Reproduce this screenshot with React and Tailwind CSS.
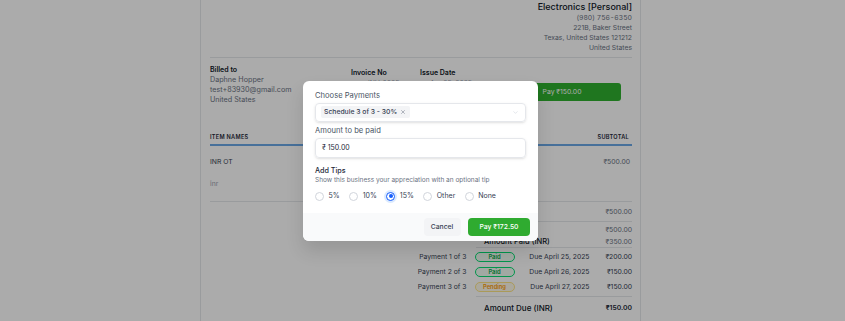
import { ChevronDown, X } from 'lucide-react';

const payments = [
  { label: 'Payment 1 of 3', status: 'Paid', due: 'Due April 25, 2025', amount: '₹200.00' },
  { label: 'Payment 2 of 3', status: 'Paid', due: 'Due April 26, 2025', amount: '₹150.00' },
  { label: 'Payment 3 of 3', status: 'Pending', due: 'Due April 27, 2025', amount: '₹150.00' },
];

const tips = ['5%', '10%', '15%', 'Other', 'None'];

function Badge({ status }) {
  const paid = status === 'Paid';
  return (
    <span
      className={`flex h-[10.5px] w-[40px] items-center justify-center rounded-full border text-[5.8px] font-semibold ${
        paid ? 'border-green-400 bg-green-50 text-green-600' : 'border-amber-200 bg-amber-50 text-amber-500'
      }`}
    >
      {status}
    </span>
  );
}

function Invoice() {
  return (
    <div className="ml-[200px] h-[321px] w-[441px] border-x border-gray-200 bg-white pl-[9px] pr-[8px] text-[6.8px] text-gray-500">
      {/* Business header */}
      <div className="pt-[1px] text-right">
        <p className="text-[9px] font-medium leading-[12px] text-gray-900">Electronics [Personal]</p>
        <div className="leading-[10px]">
          <p className="tabular-nums">(980) 756-6350</p>
          <p>221B, Baker Street</p>
          <p>Texas, United States 121212</p>
          <p>United States</p>
        </div>
      </div>
      <div className="mt-[3.5px] border-t border-gray-200" />

      {/* Billed to / meta */}
      <div className="mt-[7px] flex">
        <div className="w-[141px] text-[7.2px] leading-[10px]">
          <p className="text-[7px] font-semibold text-gray-900">Billed to</p>
          <p>Daphne Hopper</p>
          <p>test+83930@gmail.com</p>
          <p>United States</p>
        </div>
        <div className="mt-[3.6px] w-[69px] leading-[10px]">
          <p className="text-[7px] font-semibold text-gray-900">Invoice No</p>
          <p className="pl-[17px] text-gray-400">INV-0005</p>
        </div>
        <div className="mt-[3.6px] w-[83px] leading-[10px]">
          <p className="text-[7px] font-semibold text-gray-900">Issue Date</p>
          <p className="pl-[10px] text-gray-400">Apr 25, 2025</p>
        </div>
        <div className="mt-[18.3px]">
          <button className="flex h-[18px] w-[118px] items-center justify-center rounded-[3px] bg-[#2fb12f] text-[6.8px] text-white">
            Pay ₹150.00
          </button>
        </div>
      </div>

      {/* Items */}
      <div className="mt-[22.7px] flex h-[19px] items-end justify-between border-b-2 border-[#6aa8e6] pb-[2.5px] text-[5.6px] font-semibold uppercase tracking-wider text-gray-800">
        <span>Item Names</span>
        <span className="pr-[3px]">Subtotal</span>
      </div>
      <div className="flex h-[28px] items-center justify-between pt-[3.5px] text-gray-700">
        <span>INR OT</span>
        <span className="pr-[2px] text-gray-500">₹500.00</span>
      </div>
      <div className="flex h-[20px] items-center text-gray-400">
        <span>inr</span>
      </div>
      <div className="mt-[7px] border-t border-gray-200" />

      {/* Totals */}
      <div className="ml-[266px]">
        <div className="flex h-[19px] items-center justify-end pt-[1px]">
          <span>₹500.00</span>
        </div>
        <div className="border-t border-gray-200" />
        <div className="flex h-[14px] items-center justify-end pt-[1px]">
          <span>₹500.00</span>
        </div>
        <div className="flex h-[11px] items-center justify-between pl-[8px]">
          <span className="text-[7.5px] font-medium text-gray-900">Amount Paid (INR)</span>
          <span>₹350.00</span>
        </div>
        <div className="border-t border-gray-200" />
      </div>

      <div className="pt-[1.5px]">
        {payments.map((p) => (
          <div key={p.label} className="flex h-[15px] items-center justify-end text-gray-700">
            <span className="mr-[8px]">{p.label}</span>
            <Badge status={p.status} />
            <span className="w-[75px] text-right">{p.due}</span>
            <span className="w-[42.5px] text-right">{p.amount}</span>
          </div>
        ))}
      </div>

      <div className="ml-[266px]">
        <div className="mt-[1.5px] border-t border-gray-200" />
        <div className="flex h-[21px] items-center justify-between pl-[8px] pt-[1px]">
          <span className="text-[8px] font-medium text-gray-900">Amount Due (INR)</span>
          <span className="font-semibold text-gray-800">₹150.00</span>
        </div>
      </div>
    </div>
  );
}

function PaymentModal() {
  return (
    <div className="w-[235px] overflow-hidden rounded-[6px] bg-white shadow-[0_10px_18px_rgba(0,0,0,0.12)]">
      <div className="px-[12px] pt-[10px] pb-[10.7px]">
        <p className="text-[7.6px] leading-[10px] text-gray-600">Choose Payments</p>
        <div className="mt-[2px] flex h-[19px] items-center justify-between rounded-[4px] border border-gray-200 pl-[4.5px] pr-[6px] shadow-sm">
          <span className="flex h-[12px] items-center gap-[3px] rounded-[2px] bg-gray-100 pl-[3.5px] pr-[4px] text-[6.8px] font-medium text-gray-700">
            Schedule 3 of 3 - 30%
            <X className="h-[6px] w-[6px] text-gray-500" strokeWidth={2} />
          </span>
          <ChevronDown className="h-[7px] w-[7px] text-gray-300" strokeWidth={2} />
        </div>

        <p className="mt-[4.4px] text-[7.6px] leading-[10px] text-gray-600">Amount to be paid</p>
        <div className="mt-[2px] flex h-[20px] items-center rounded-[4px] border border-gray-200 pl-[6px] text-[7px] text-gray-800 shadow-sm">
          ₹ 150.00
        </div>

        <p className="mt-[8px] text-[7.2px] font-medium leading-[10px] text-gray-800">Add Tips</p>
        <p className="text-[6.5px] leading-[8px] text-gray-500">Show this business your appreciation with an optional tip</p>

        <div className="mt-[6.3px] flex h-[12px] items-center gap-[9.5px]">
          {tips.map((t) => {
            const selected = t === '15%';
            return (
              <label key={t} className="flex items-center gap-[4.5px] text-[7px] text-gray-700">
                <span
                  className={`flex h-[9px] w-[9px] items-center justify-center rounded-full border ${
                    selected ? 'border-blue-600 bg-white ring-2 ring-blue-100' : 'border-gray-300 bg-white'
                  }`}
                >
                  {selected && <span className="h-[4.5px] w-[4.5px] rounded-full bg-blue-600" />}
                </span>
                {t}
              </label>
            );
          })}
        </div>
      </div>

      <div className="flex h-[28.6px] items-center justify-end gap-[7.5px] bg-gray-50 pr-[8px]">
        <button className="h-[17.4px] w-[37px] rounded-[4px] bg-gray-100 text-[6.8px] font-medium text-gray-700">
          Cancel
        </button>
        <button className="h-[17.4px] w-[62px] rounded-[4px] bg-[#2fab30] text-[6.8px] font-medium text-white">
          Pay ₹172.50
        </button>
      </div>
    </div>
  );
}

export default function App() {
  return (
    <div className="relative h-[321px] w-[845px] overflow-hidden bg-white font-['Inter',sans-serif]">
      <Invoice />
      <div className="absolute inset-0 flex items-center justify-center bg-black/[0.33]">
        <div className="ml-[-4px] mt-[1px]">
          <PaymentModal />
        </div>
      </div>
    </div>
  );
}
